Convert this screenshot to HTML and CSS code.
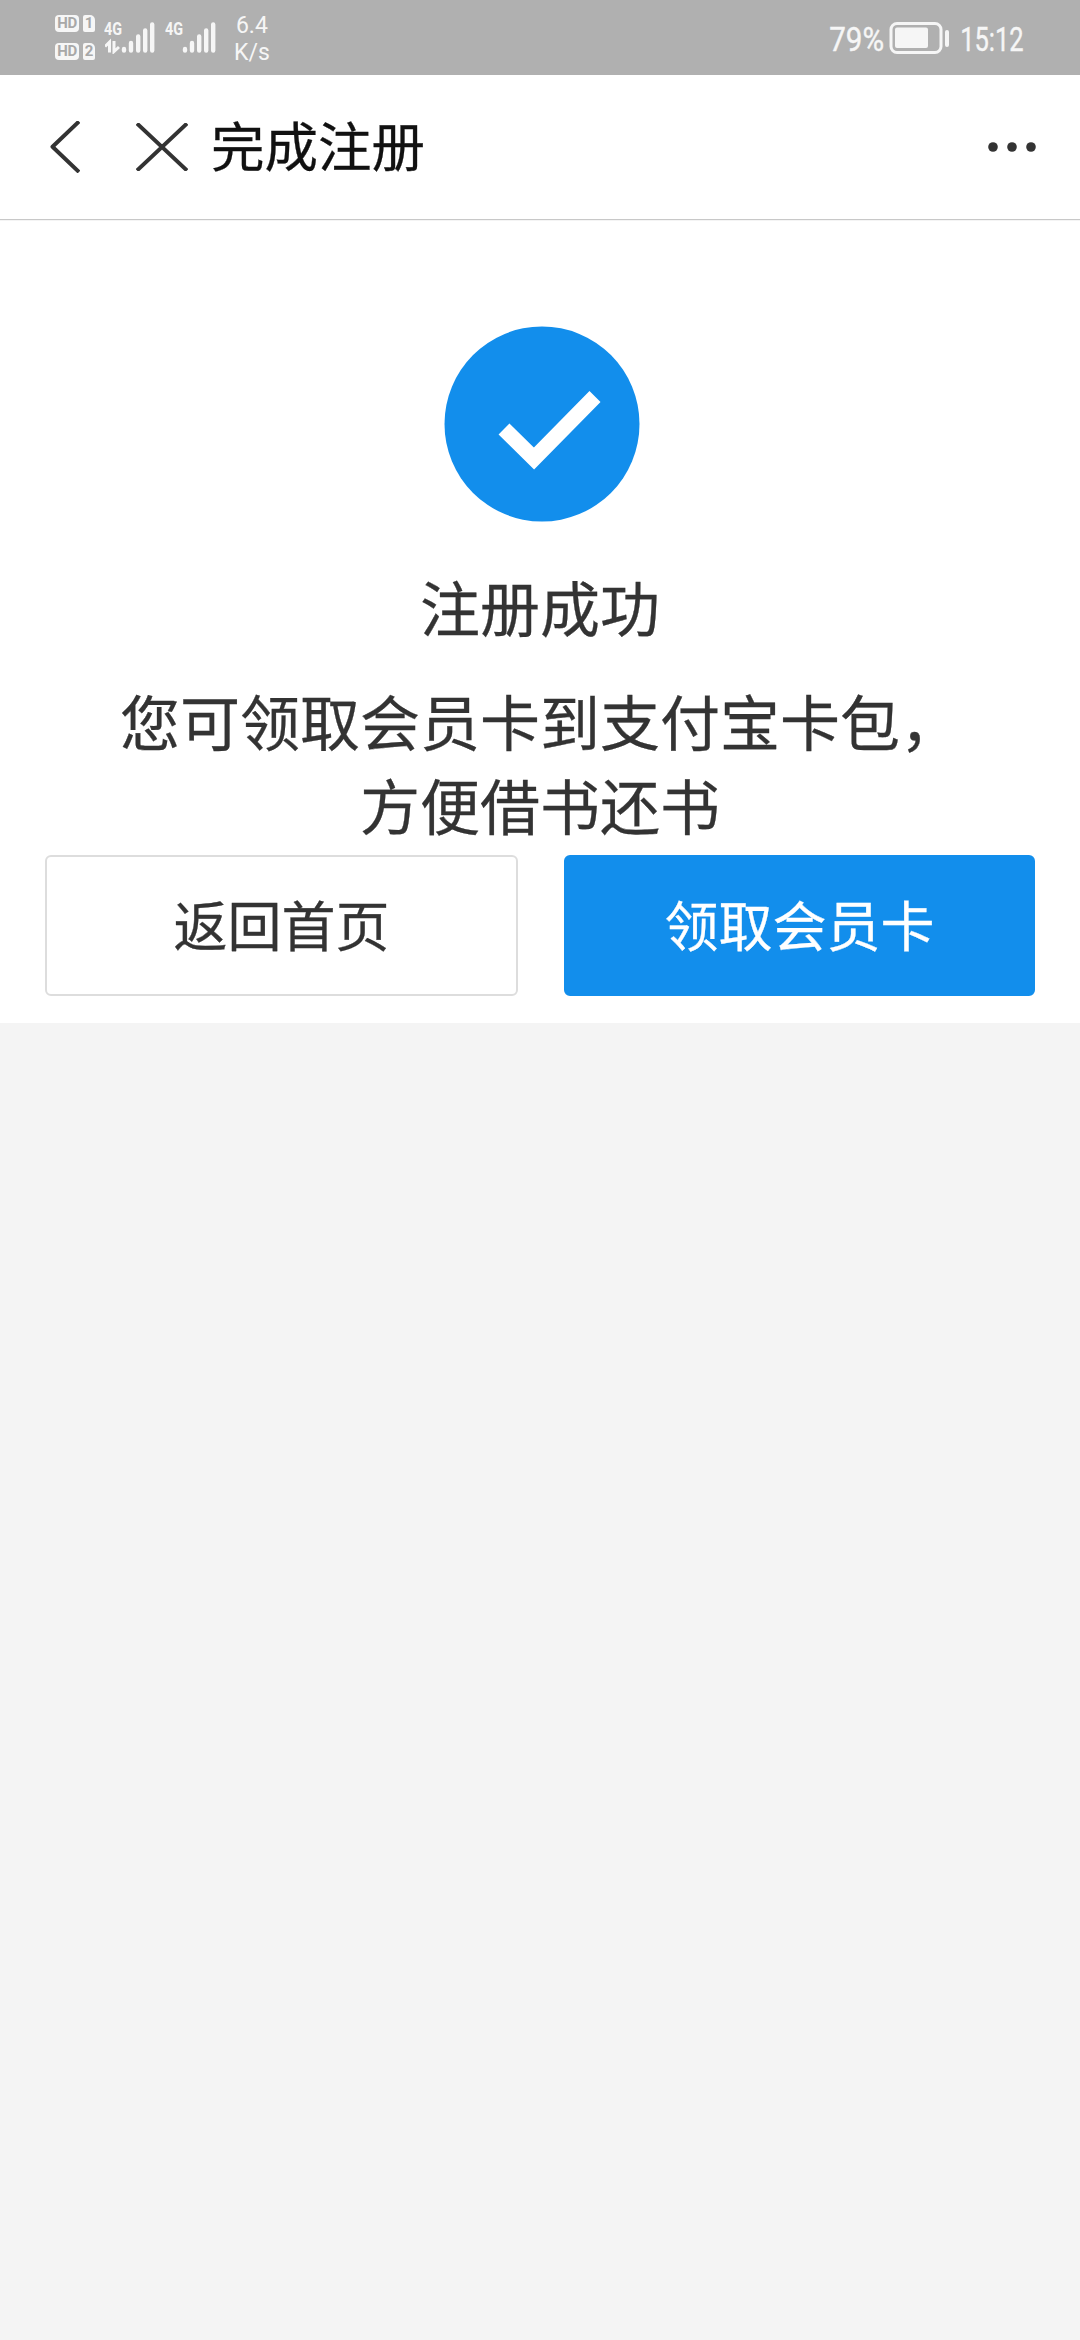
FILE: index.html
```html
<!DOCTYPE html>
<html lang="zh-CN">
<head>
<meta charset="utf-8">
<title>完成注册</title>
<link rel="stylesheet" href="styles.css">
</head>
<body>
<div class="status-bar">
  <div class="status-left">
    <div class="hd-list">
      <div class="hd-row"><span class="hd">HD</span><span class="sim">1</span></div>
      <div class="hd-row"><span class="hd">HD</span><span class="sim">2</span></div>
    </div>
    <div class="signal">
      <span class="net">4G</span>
      <svg width="52" height="34" viewBox="0 0 52 34" fill="none" stroke="#f6f6f6" stroke-width="4.4" stroke-linecap="round">
        <path d="M19 29v1.500M26 23v7.500M33.200 16.500v14M40.200 10.500v20M47.200 4.500v26"/>
        <path d="M0 26.500L4.500 22V32.500M9 21V31.500L14 27" stroke-width="3" stroke-linecap="butt"/>
      </svg>
    </div>
    <div class="signal">
      <span class="net">4G</span>
      <svg width="52" height="34" viewBox="0 0 52 34" fill="none" stroke="#f6f6f6" stroke-width="4.4" stroke-linecap="round">
        <path d="M19 29v1.500M26 23v7.500M33.200 16.500v14M40.200 10.500v20M47.200 4.500v26"/>
      </svg>
    </div>
    <div class="speed"><span>6.4</span><span>K/s</span></div>
  </div>
  <div class="status-right">
    <span class="percent">79%</span>
    <svg class="battery" width="60" height="34" viewBox="0 0 60 34">
      <rect x="2" y="2.500" width="50" height="29" rx="6" fill="none" stroke="#f6f6f6" stroke-width="3"/>
      <rect x="6" y="6.500" width="33" height="20.500" rx="2" fill="#f6f6f6"/>
      <rect x="56" y="9" width="4" height="17" rx="2" fill="#f6f6f6"/>
    </svg>
    <span class="clock">15:12</span>
  </div>
</div>
<header class="nav">
  <svg class="back" width="30" height="52" viewBox="0 0 30 52" fill="none" stroke="#333" stroke-width="4" stroke-linejoin="round"><path d="M29 .5L2.500 25.700L29 51"/></svg>
  <svg class="close" width="52" height="48" viewBox="0 0 52 48" fill="none" stroke="#333" stroke-width="4"><path d="M1 .5L51 47.500M51 .5L1 47.500"/></svg>
  <h1 class="nav-title">完成注册</h1>
  <svg class="more" width="48" height="10" viewBox="0 0 48 10" fill="#333"><circle cx="5" cy="5" r="4.800"/><circle cx="24" cy="5" r="4.800"/><circle cx="43" cy="5" r="4.800"/></svg>
</header>
<main class="panel">
  <svg class="success" width="196" height="196" viewBox="0 0 196 196"><circle cx="98" cy="98" r="97.500" fill="#128eec"/><path d="M60 103L90 132.500L151 70.500" fill="none" stroke="#fff" stroke-width="15.500"/></svg>
  <h2 class="result">注册成功</h2>
  <p class="desc">您可领取会员卡到支付宝卡包，<br>方便借书还书</p>
  <div class="actions">
    <button class="btn">返回首页</button>
    <button class="btn primary">领取会员卡</button>
  </div>
</main>
</body>
</html>
```
FILE: styles.css
```css
* { box-sizing: border-box; margin: 0; padding: 0; }
body {
  min-height: 2340px;
  background: #f4f4f4;
  color: #333;
  font-family: "Noto Sans CJK SC", sans-serif;
}
svg { display: block; flex: none; }
.status-bar {
  height: 75px;
  padding: 0 56px 0 55px;
  display: flex;
  justify-content: space-between;
  background: #b0b0b0;
  color: #f6f6f6;
  font-family: Roboto, sans-serif;
}
.status-left { display: flex; }
.hd-list { display: flex; flex-direction: column; gap: 11px; padding-top: 15px; }
.hd-row { display: flex; gap: 4px; height: 17px; }
.hd, .sim {
  display: flex;
  align-items: center;
  justify-content: center;
  border-radius: 4px;
  background: #f6f6f6;
  color: #a8a8a8;
  font-weight: 700;
  font-size: 15px;
  line-height: 17px;
}
.hd { width: 24px; letter-spacing: -.5px; }
.sim { width: 12px; border-radius: 2px 5px 2px 2px; }
.signal { position: relative; width: 61px; padding: 20px 0 0 10px; }
.net {
  position: absolute;
  left: 9px;
  top: 20px;
  font: 700 18px/18px Roboto, sans-serif;
  transform: scaleX(.8);
  transform-origin: left;
}
.speed { display: flex; flex-direction: column; align-items: center; padding: 12px 0 0 17px; font-size: 23px; line-height: 27px; }
.status-right { display: flex; align-items: center; padding-top: 2px; }
.percent, .clock { font-size: 34px; white-space: nowrap; transform-origin: right; -webkit-text-stroke: .4px; }
.percent { transform: scaleX(.87); margin-right: 5px; }
.battery { margin-bottom: 2px; }
.clock { transform: scaleX(.75); margin-left: -10px; }
.nav {
  height: 146px;
  display: flex;
  align-items: center;
  padding: 0 44px 1px 50px;
  background: #fff;
  border-bottom: 1px solid #f4f4f4;
  box-shadow: inset 0 -1px #c8c8c8;
}
.close { margin-left: 56px; }
.nav-title { margin: -6px 0 0 23px; font-size: 53.5px; font-weight: 400; line-height: 80px; color: #111; -webkit-text-stroke: .3px; }
.more { margin-left: auto; }
.panel {
  height: 802px;
  display: flex;
  flex-direction: column;
  align-items: center;
  padding: 105px 45px 0;
  background: #fff;
}
.success { margin-left: 3px; }
.result { margin-top: 42px; font-size: 60px; font-weight: 400; line-height: 84px; -webkit-text-stroke: .3px; }
.desc { margin-top: 30px; font-size: 60px; line-height: 84px; text-align: center; white-space: nowrap; -webkit-text-stroke: .3px; }
.actions { width: 100%; margin-top: 9px; display: grid; grid-template-columns: 473px 471px; justify-content: space-between; }
.btn {
  height: 141px;
  padding-bottom: 3px;
  border: 2px solid #ddd;
  border-radius: 6px;
  background: #fff;
  color: #333;
  font: 400 54px/80px "Noto Sans CJK SC", sans-serif;
  -webkit-text-stroke: .3px;
}
.primary { border-color: #128eec; background: #128eec; color: #fff; }
```
